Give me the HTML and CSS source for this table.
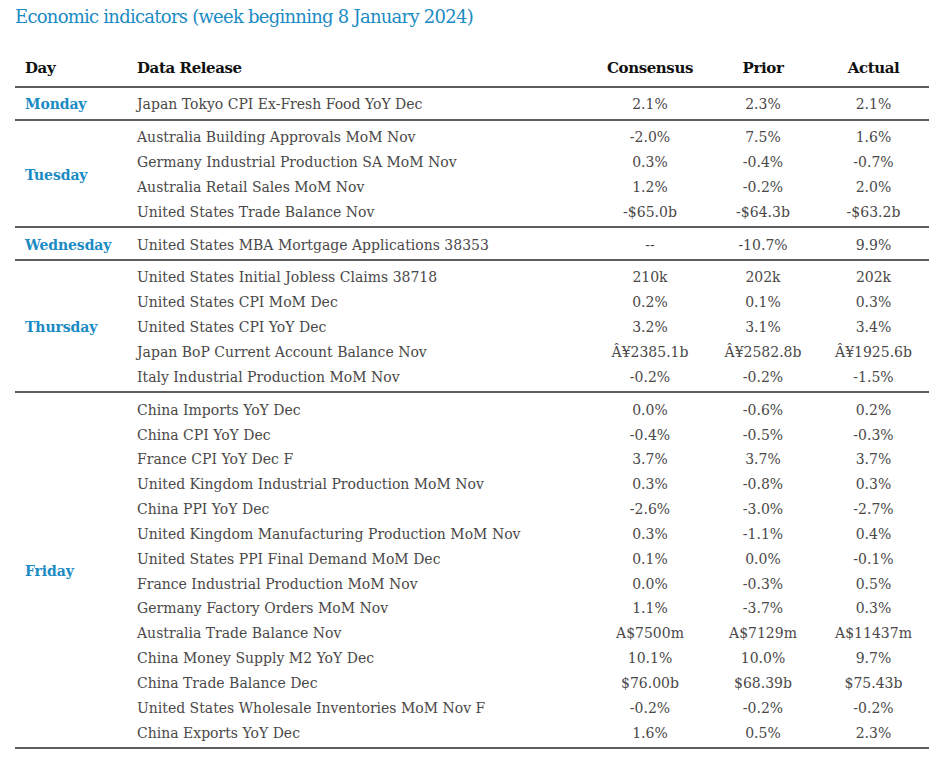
FILE: index.html
```html
<!DOCTYPE html>
<html lang="en">
<head>
<meta charset="utf-8">
<title>Economic indicators</title>
<link rel="stylesheet" href="styles.css">
</head>
<body>
<div class="page">
  <h1 class="title">Economic indicators (week beginning 8 January 2024)</h1>
  <div class="table">
    <div class="head">
      <div class="day">Day</div>
      <div class="rows">
        <div class="row">
          <div class="rel">Data Release</div>
          <div class="num">Consensus</div>
          <div class="num">Prior</div>
          <div class="num">Actual</div>
        </div>
      </div>
    </div>

    <div class="group">
      <div class="day">Monday</div>
      <div class="rows">
        <div class="row"><div class="rel">Japan Tokyo CPI Ex-Fresh Food YoY Dec</div><div class="num">2.1%</div><div class="num">2.3%</div><div class="num">2.1%</div></div>
      </div>
    </div>

    <div class="group">
      <div class="day">Tuesday</div>
      <div class="rows">
        <div class="row"><div class="rel">Australia Building Approvals MoM Nov</div><div class="num">-2.0%</div><div class="num">7.5%</div><div class="num">1.6%</div></div>
        <div class="row"><div class="rel">Germany Industrial Production SA MoM Nov</div><div class="num">0.3%</div><div class="num">-0.4%</div><div class="num">-0.7%</div></div>
        <div class="row"><div class="rel">Australia Retail Sales MoM Nov</div><div class="num">1.2%</div><div class="num">-0.2%</div><div class="num">2.0%</div></div>
        <div class="row"><div class="rel">United States Trade Balance Nov</div><div class="num">-$65.0b</div><div class="num">-$64.3b</div><div class="num">-$63.2b</div></div>
      </div>
    </div>

    <div class="group">
      <div class="day">Wednesday</div>
      <div class="rows">
        <div class="row"><div class="rel">United States MBA Mortgage Applications 38353</div><div class="num">--</div><div class="num">-10.7%</div><div class="num">9.9%</div></div>
      </div>
    </div>

    <div class="group">
      <div class="day">Thursday</div>
      <div class="rows">
        <div class="row"><div class="rel">United States Initial Jobless Claims 38718</div><div class="num">210k</div><div class="num">202k</div><div class="num">202k</div></div>
        <div class="row"><div class="rel">United States CPI MoM Dec</div><div class="num">0.2%</div><div class="num">0.1%</div><div class="num">0.3%</div></div>
        <div class="row"><div class="rel">United States CPI YoY Dec</div><div class="num">3.2%</div><div class="num">3.1%</div><div class="num">3.4%</div></div>
        <div class="row"><div class="rel">Japan BoP Current Account Balance Nov</div><div class="num">Â¥2385.1b</div><div class="num">Â¥2582.8b</div><div class="num">Â¥1925.6b</div></div>
        <div class="row"><div class="rel">Italy Industrial Production MoM Nov</div><div class="num">-0.2%</div><div class="num">-0.2%</div><div class="num">-1.5%</div></div>
      </div>
    </div>

    <div class="group">
      <div class="day">Friday</div>
      <div class="rows">
        <div class="row"><div class="rel">China Imports YoY Dec</div><div class="num">0.0%</div><div class="num">-0.6%</div><div class="num">0.2%</div></div>
        <div class="row"><div class="rel">China CPI YoY Dec</div><div class="num">-0.4%</div><div class="num">-0.5%</div><div class="num">-0.3%</div></div>
        <div class="row"><div class="rel">France CPI YoY Dec F</div><div class="num">3.7%</div><div class="num">3.7%</div><div class="num">3.7%</div></div>
        <div class="row"><div class="rel">United Kingdom Industrial Production MoM Nov</div><div class="num">0.3%</div><div class="num">-0.8%</div><div class="num">0.3%</div></div>
        <div class="row"><div class="rel">China PPI YoY Dec</div><div class="num">-2.6%</div><div class="num">-3.0%</div><div class="num">-2.7%</div></div>
        <div class="row"><div class="rel">United Kingdom Manufacturing Production MoM Nov</div><div class="num">0.3%</div><div class="num">-1.1%</div><div class="num">0.4%</div></div>
        <div class="row"><div class="rel">United States PPI Final Demand MoM Dec</div><div class="num">0.1%</div><div class="num">0.0%</div><div class="num">-0.1%</div></div>
        <div class="row"><div class="rel">France Industrial Production MoM Nov</div><div class="num">0.0%</div><div class="num">-0.3%</div><div class="num">0.5%</div></div>
        <div class="row"><div class="rel">Germany Factory Orders MoM Nov</div><div class="num">1.1%</div><div class="num">-3.7%</div><div class="num">0.3%</div></div>
        <div class="row"><div class="rel">Australia Trade Balance Nov</div><div class="num">A$7500m</div><div class="num">A$7129m</div><div class="num">A$11437m</div></div>
        <div class="row"><div class="rel">China Money Supply M2 YoY Dec</div><div class="num">10.1%</div><div class="num">10.0%</div><div class="num">9.7%</div></div>
        <div class="row"><div class="rel">China Trade Balance Dec</div><div class="num">$76.00b</div><div class="num">$68.39b</div><div class="num">$75.43b</div></div>
        <div class="row"><div class="rel">United States Wholesale Inventories MoM Nov F</div><div class="num">-0.2%</div><div class="num">-0.2%</div><div class="num">-0.2%</div></div>
        <div class="row"><div class="rel">China Exports YoY Dec</div><div class="num">1.6%</div><div class="num">0.5%</div><div class="num">2.3%</div></div>
      </div>
    </div>
  </div>
</div>
</body>
</html>
```
FILE: styles.css
```css
html, body {
  margin: 0;
  padding: 0;
  background: #ffffff;
}

.page {
  padding: 5px 11px 0 15px;
  font-family: "DejaVu Serif", serif;
  color: #4a4848;
}

.title {
  margin: 0;
  font-size: 18px;
  font-weight: normal;
  line-height: 24px;
  color: #1b8bc3;
  letter-spacing: -0.75px;
}

.table {
  width: 914px;
  margin-top: 20px;
}

.head,
.group {
  display: flex;
  border-bottom: 2px solid #5e5e5e;
}

.head {
  height: 37px;
  align-items: center;
  font-weight: bold;
  color: #111;
}

.group {
  padding: 4px 0 2px;
  align-items: center;
}

.day {
  width: 107px;
  flex: none;
  padding-left: 10px;
  box-sizing: border-box;
  font-size: 14px;
  letter-spacing: -0.1px;
}

.group .day {
  font-weight: bold;
  color: #1b8bc3;
}

.head .day {
  font-size: 15px;
  letter-spacing: -0.4px;
}

.rows {
  flex: 1;
  align-self: stretch;
  display: flex;
  flex-direction: column;
  justify-content: center;
}

.row {
  display: grid;
  grid-template-columns: 470px 116px 110px 111px;
  height: 24.85px;
  align-items: center;
  font-size: 14px;
  letter-spacing: 0;
}

.head .row {
  font-size: 15px;
  letter-spacing: -0.4px;
}

.rel {
  padding-left: 15px;
  white-space: nowrap;
}

.num {
  text-align: center;
  white-space: nowrap;
}
```
